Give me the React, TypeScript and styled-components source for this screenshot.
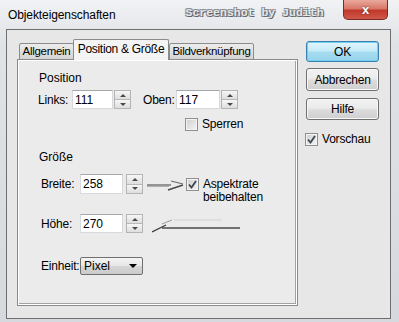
import styled, { createGlobalStyle } from "styled-components";

const GlobalStyle = createGlobalStyle`
  html, body {
    margin: 0;
    padding: 0;
  }
  body {
    font-family: "Liberation Sans", Arial, sans-serif;
    font-size: 11px;
    color: #000;
  }
`;

const Window = styled.div`
  width: 399px;
  height: 322px;
  display: flex;
  flex-direction: column;
  background: linear-gradient(180deg, #f1f2f4 0%, #dfe2e6 14%, #d6d9dd 100%);
  overflow: hidden;
`;

const TitleBar = styled.div`
  height: 29px;
  flex-shrink: 0;
  display: flex;
  align-items: flex-start;
`;

const Title = styled.div`
  margin: 8px 0 0 8px;
  font-size: 12px;
  line-height: 14px;
  letter-spacing: -0.1px;
`;

const Watermark = styled.div`
  margin: 6px 0 0 70px;
  font-family: "Liberation Mono", monospace;
  font-weight: bold;
  font-size: 11.5px;
  line-height: 14px;
  color: #e4e6e8;
  text-shadow: 1px 1px 0 #5f6368, -1px -1px 0 #8c9095, 1px -1px 0 #8c9095, -1px 1px 0 #8c9095;
  white-space: nowrap;
`;

const CloseButton = styled.div`
  margin-left: auto;
  margin-right: 11px;
  width: 45px;
  height: 20px;
  box-sizing: border-box;
  border: 1px solid #7a2a24;
  border-top: none;
  border-radius: 0 0 5px 5px;
  background: linear-gradient(180deg, #e9a99c 0%, #d9786a 45%, #c0392b 55%, #d0584a 100%);
  display: flex;
  align-items: center;
  justify-content: center;
  color: #fff;
  font-weight: bold;
  font-size: 13px;
  text-shadow: 0 0 2px #5a1a14;
`;

const Client = styled.div`
  flex: 1;
  margin: 0 8px 3px 6px;
  border: 1px solid #6e6e6e;
  background: #e7e7e7;
  display: flex;
  padding: 9px 0 0 10px;
`;

const TabArea = styled.div`
  width: 281px;
  display: flex;
  flex-direction: column;
`;

const TabRow = styled.div`
  height: 21px;
  display: flex;
  align-items: flex-end;
  padding-left: 2px;
  margin-bottom: -1px;
  position: relative;
  z-index: 1;
`;

const Tab = styled.div<{ $active?: boolean; $w: number }>`
  width: ${(p) => p.$w}px;
  height: ${(p) => (p.$active ? 21 : 17)}px;
  box-sizing: border-box;
  border: 1px solid #8b8b8b;
  border-bottom: ${(p) => (p.$active ? "none" : "1px solid #8b8b8b")};
  margin-left: ${(p) => (p.$active ? -1 : 0)}px;
  border-radius: 2px 2px 0 0;
  background: ${(p) =>
    p.$active ? "#f4f4f4" : "linear-gradient(180deg, #ececec 0%, #d4d4d4 100%)"};
  display: flex;
  align-items: ${(p) => (p.$active ? "flex-start" : "center")};
  justify-content: center;
  padding-top: ${(p) => (p.$active ? 3 : 0)}px;
  line-height: 13px;
  font-size: ${(p) => (p.$active ? 12 : 11.5)}px;
  letter-spacing: -0.3px;
  white-space: nowrap;
  z-index: ${(p) => (p.$active ? 2 : 1)};
`;

const Panel = styled.div`
  height: 247px;
  box-sizing: border-box;
  border: 1px solid #8a8a8a;
  background: #ebebeb;
  box-shadow: inset 1px 1px 0 #fff, inset -1px -1px 0 #fff, inset -2px -2px 0 #a2a2a2;
  padding: 11px 0 0 20px;
  display: flex;
  flex-direction: column;
`;

const SectionTitle = styled.div<{ $top: number }>`
  margin: ${(p) => p.$top}px 0 0 1px;
  line-height: 13px;
  font-size: 12px;
`;

const Row = styled.div<{ $top: number; $left?: number }>`
  display: flex;
  align-items: flex-start;
  margin-top: ${(p) => p.$top}px;
  margin-left: ${(p) => p.$left ?? 0}px;
`;

const FieldLabel = styled.div<{ $w: number; $h: number; $gap?: number }>`
  width: ${(p) => p.$w}px;
  height: ${(p) => p.$h}px;
  margin-left: ${(p) => p.$gap ?? 0}px;
  display: flex;
  align-items: center;
  font-size: 12px;
  letter-spacing: -0.2px;
`;

const Field = styled.div<{ $w: number; $h: number }>`
  width: ${(p) => p.$w}px;
  height: ${(p) => p.$h}px;
  box-sizing: border-box;
  background: #fff;
  border: 1px solid #d6d9dd;
  border-top-color: #a4a7ab;
  display: flex;
  align-items: center;
  padding-left: 2px;
  font-size: 12px;
`;

const Spin = styled.div<{ $h: number; $gap: number }>`
  width: 17px;
  height: ${(p) => p.$h}px;
  margin-left: ${(p) => p.$gap}px;
  display: flex;
  flex-direction: column;
  box-sizing: border-box;
  border: 1px solid #b4b4b4;
  background: #f3f3f3;
`;

const SpinHalf = styled.div<{ $down?: boolean }>`
  flex: 1;
  display: flex;
  align-items: center;
  justify-content: center;
  background: linear-gradient(180deg, #f6f6f6, #dedede);
  border-top: ${(p) => (p.$down ? "1px solid #b8b8b8" : "none")};

  &::after {
    content: "";
    border-left: 3px solid transparent;
    border-right: 3px solid transparent;
    ${(p) => (p.$down ? "border-top: 3px solid #4a4a4a;" : "border-bottom: 3px solid #4a4a4a;")}
  }
`;

const Box = styled.div`
  width: 13px;
  height: 13px;
  box-sizing: border-box;
  border: 1px solid #8e8f8f;
  background: linear-gradient(135deg, #cfcfcf 0%, #f4f4f4 100%);
  box-shadow: inset 0 0 0 1px #f4f4f4;
  display: flex;
  align-items: center;
  justify-content: center;
  flex-shrink: 0;
`;

const CheckText = styled.div`
  margin-left: 4px;
  font-size: 12px;
  line-height: 13px;
  letter-spacing: -0.2px;
`;

const Arrow = styled.svg<{ $gap: number }>`
  margin-left: ${(p) => p.$gap}px;
  flex-shrink: 0;
`;

const Select = styled.div`
  width: 63px;
  height: 18px;
  box-sizing: border-box;
  border: 1px solid #707070;
  border-radius: 2px;
  background: linear-gradient(180deg, #f4f4f4 0%, #e6e6e6 50%, #d6d6d6 51%, #cbcbcb 100%);
  display: flex;
  align-items: center;
  padding: 0 5px 0 3px;
  font-size: 12px;

  &::after {
    content: "";
    margin-left: auto;
    border-left: 4px solid transparent;
    border-right: 4px solid transparent;
    border-top: 4px solid #000;
  }
`;

const ButtonColumn = styled.div`
  width: 73px;
  margin-left: 8px;
  display: flex;
  flex-direction: column;
`;

const Button = styled.div<{ $primary?: boolean; $top: number; $h: number }>`
  margin-top: ${(p) => p.$top}px;
  height: ${(p) => p.$h}px;
  box-sizing: border-box;
  border: 1px solid ${(p) => (p.$primary ? "#3c7fb1" : "#707070")};
  border-radius: 3px;
  background: ${(p) =>
    p.$primary
      ? "linear-gradient(180deg, #e5f5fc 0%, #c6ebf8 45%, #a5dcf1 55%, #98d4ec 100%)"
      : "linear-gradient(180deg, #f2f2f2 0%, #ebebeb 45%, #dcdcdc 55%, #cfcfcf 100%)"};
  box-shadow: ${(p) => (p.$primary ? "inset 0 0 0 1px #6fd0f0" : "inset 0 0 0 1px #f8f8f8")};
  display: flex;
  align-items: center;
  justify-content: center;
  font-size: 12px;
  letter-spacing: -0.2px;
`;

const CheckRow = styled.div`
  display: flex;
  align-items: center;
  margin: 13px 0 0 -1px;
`;

const Check = () => (
  <svg width="9" height="9" viewBox="0 0 9 9">
    <path d="M1 4.5 L3.5 7.5 L8 1" fill="none" stroke="#3d4650" strokeWidth="1.8" />
  </svg>
);

const Spinner = ({ h, gap }: { h: number; gap: number }) => (
  <Spin $h={h} $gap={gap}>
    <SpinHalf />
    <SpinHalf $down />
  </Spin>
);

export default function App() {
  return (
    <>
      <GlobalStyle />
      <Window>
        <TitleBar>
          <Title>Objekteigenschaften</Title>
          <Watermark>Screenshot by Judith</Watermark>
          <CloseButton>x</CloseButton>
        </TitleBar>
        <Client>
          <TabArea>
            <TabRow>
              <Tab $w={55}>Allgemein</Tab>
              <Tab $w={96} $active>
                Position &amp; Größe
              </Tab>
              <Tab $w={85}>Bildverknüpfung</Tab>
            </TabRow>
            <Panel>
              <SectionTitle $top={1}>Position</SectionTitle>
              <Row $top={5}>
                <FieldLabel $w={34} $h={19}>Links:</FieldLabel>
                <Field $w={41} $h={19}>111</Field>
                <Spinner h={19} gap={1} />
                <FieldLabel $w={33} $h={19} $gap={12}>Oben:</FieldLabel>
                <Field $w={44} $h={19}>117</Field>
                <Spinner h={19} gap={1} />
              </Row>
              <Row $top={9} $left={147}>
                <Box />
                <CheckText>Sperren</CheckText>
              </Row>
              <SectionTitle $top={20}>Größe</SectionTitle>
              <Row $top={10} $left={3}>
                <FieldLabel $w={39} $h={20}>Breite:</FieldLabel>
                <Field $w={43} $h={20}>258</Field>
                <Spinner h={20} gap={3} />
                <Arrow $gap={4} width="37" height="20" viewBox="0 0 37 20">
                  <path d="M0 11 H24" stroke="#5a5a5a" strokeWidth="1.2" />
                  <path d="M0 12.5 H22" stroke="#b0b0b0" strokeWidth="1" />
                  <path d="M24 7 L36 10" stroke="#6a6a6a" strokeWidth="1.2" />
                  <path d="M21 16 L36 11" stroke="#4a4a4a" strokeWidth="1.4" />
                </Arrow>
                <Row $top={4} $left={2}>
                  <Box>
                    <Check />
                  </Box>
                  <CheckText>
                    Aspektrate
                    <br />
                    beibehalten
                  </CheckText>
                </Row>
              </Row>
              <Row $top={10} $left={3}>
                <FieldLabel $w={39} $h={19}>Höhe:</FieldLabel>
                <Field $w={43} $h={19}>270</Field>
                <Spinner h={19} gap={3} />
                <Arrow $gap={9} width="88" height="19" viewBox="0 0 88 19">
                  <path d="M10 14 H88" stroke="#4a4a4a" strokeWidth="1.3" />
                  <path d="M22 6 H70" stroke="#dedede" strokeWidth="2" />
                  <path d="M0 18 L14 11" stroke="#3a3a3a" strokeWidth="1.3" />
                  <path d="M10 10 L20 6" stroke="#9a9a9a" strokeWidth="1" />
                </Arrow>
              </Row>
              <Row $top={24} $left={3}>
                <FieldLabel $w={39} $h={18}>Einheit:</FieldLabel>
                <Select>Pixel</Select>
              </Row>
            </Panel>
          </TabArea>
          <ButtonColumn>
            <Button $primary $top={2} $h={21}>OK</Button>
            <Button $top={6} $h={23}>Abbrechen</Button>
            <Button $top={7} $h={22}>Hilfe</Button>
            <CheckRow>
              <Box>
                <Check />
              </Box>
              <CheckText>Vorschau</CheckText>
            </CheckRow>
          </ButtonColumn>
        </Client>
      </Window>
    </>
  );
}
